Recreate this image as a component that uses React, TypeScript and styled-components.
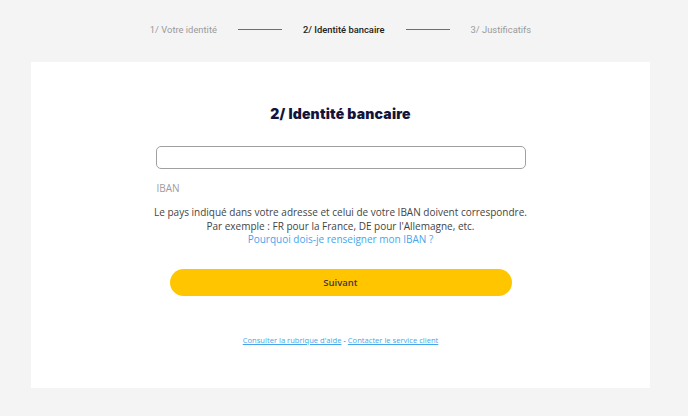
import styled, {createGlobalStyle} from "styled-components";

const GlobalStyle = createGlobalStyle`
    body {
        margin: 0;
        background: #f4f4f4;
        font-family: "Open Sans", "Liberation Sans", sans-serif;
    }
`;

const Page = styled.div`
    width: 688px;
    height: 416px;
    overflow: hidden;
`;

const Stepper = styled.nav`
    display: flex;
    align-items: center;
    justify-content: center;
    gap: 21px;
    height: 62px;
    width: 619px;
    margin-left: 31px;
    font-family: Roboto, "Liberation Sans", sans-serif;
    font-size: 9.4px;
    padding-bottom: 4px;
    box-sizing: border-box;
`;

const Step = styled.span<{ $active?: boolean }>`
    color: ${(p) => (p.$active ? "#222" : "#9a9a9a")};
    font-weight: ${(p) => (p.$active ? 500 : 400)};
`;

const StepLine = styled.span`
    width: 44px;
    height: 1px;
    background: #6e6e6e;
`;

const Card = styled.main`
    width: 619px;
    height: 326px;
    margin-left: 31px;
    background: #fff;
    display: flex;
    flex-direction: column;
    align-items: center;
    padding-top: 42px;
    box-sizing: border-box;
    text-align: center;

    & > * {
        flex-shrink: 0;
    }
`;

const Title = styled.h2`
    margin: 0;
    font-family: Inter, "DejaVu Sans", sans-serif;
    font-weight: 900;
    font-size: 14px;
    letter-spacing: 0.2px;
    color: #14143a;
    line-height: 20px;
`;

const Field = styled.div`
    width: 370px;
    margin-top: 22px;
    display: flex;
    flex-direction: column;
    align-items: flex-start;
`;

const Input = styled.input`
    width: 100%;
    height: 23px;
    box-sizing: border-box;
    border: 1px solid #a0a0a0;
    border-radius: 5px;
    outline: none;
    background: #fff;
`;

const Label = styled.label`
    margin-top: 12px;
    margin-left: 1px;
    font-size: 10px;
    color: #9c9c9c;
`;

const Help = styled.p`
    margin: 11px 0 0;
    font-size: 10px;
    line-height: 13.5px;
    color: #444;
`;

const HelpLink = styled.a`
    color: #45a6ec;
    text-decoration: none;
`;

const NextButton = styled.button`
    margin-top: 22px;
    width: 342px;
    height: 27px;
    border: none;
    border-radius: 14px;
    background: #ffc600;
    color: #3a3a3a;
    font-family: "Open Sans", sans-serif;
    font-size: 9.5px;
    font-weight: 600;
`;

const Footer = styled.div`
    margin-top: 39px;
    font-size: 7.6px;
    color: #555;
`;

const FooterLink = styled.a`
    color: #45a6ec;
    text-decoration: underline;
`;

export default function App() {
    return (
        <Page>
            <GlobalStyle/>
            <Stepper>
                <Step>1/ Votre identité</Step>
                <StepLine/>
                <Step $active>2/ Identité bancaire</Step>
                <StepLine/>
                <Step>3/ Justificatifs</Step>
            </Stepper>
            <Card>
                <Title>2/ Identité bancaire</Title>
                <Field>
                    <Input id="iban"/>
                    <Label htmlFor="iban">IBAN</Label>
                </Field>
                <Help>
                    Le pays indiqué dans votre adresse et celui de votre IBAN doivent correspondre.<br/>
                    Par exemple : FR pour la France, DE pour l'Allemagne, etc.<br/>
                    <HelpLink href="#">Pourquoi dois-je renseigner mon IBAN ?</HelpLink>
                </Help>
                <NextButton>Suivant</NextButton>
                <Footer>
                    <FooterLink href="#">Consulter la rubrique d'aide</FooterLink>
                    {" - "}
                    <FooterLink href="#">Contacter le service client</FooterLink>
                </Footer>
            </Card>
        </Page>
    );
}
